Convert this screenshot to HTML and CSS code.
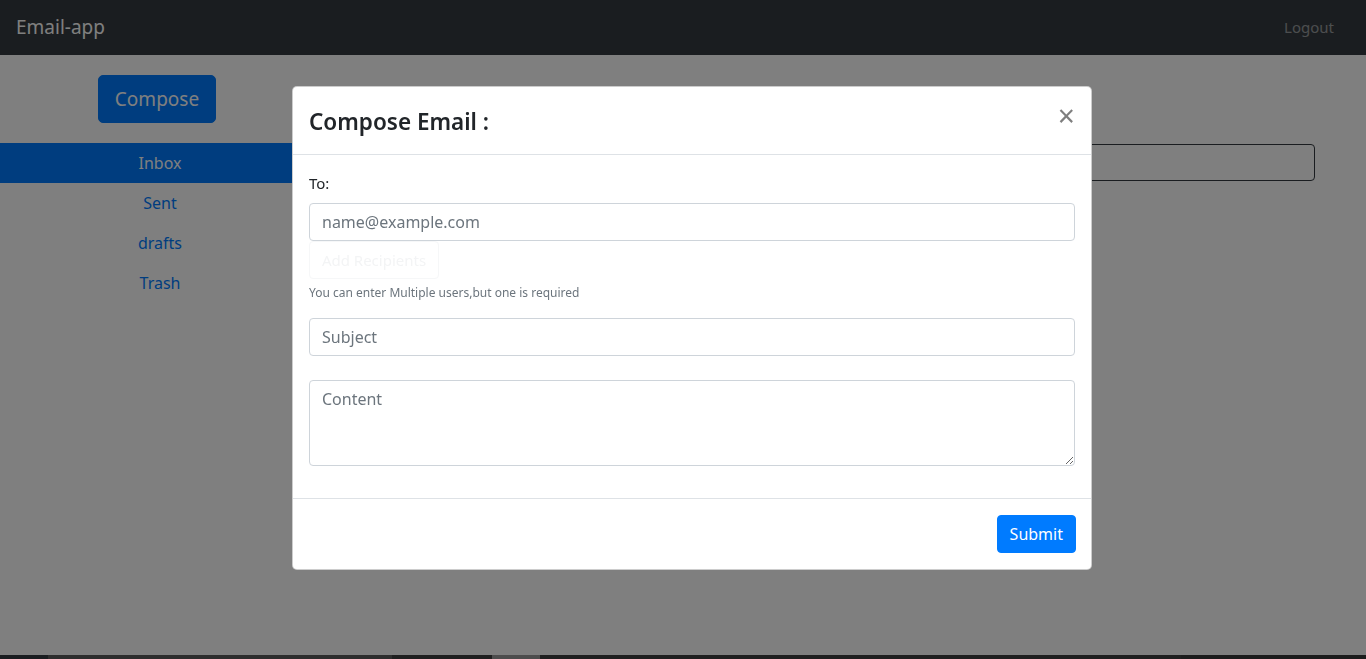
FILE: index.html
```html
<!DOCTYPE html>
<html>
<head>
<meta charset="utf-8">
<link rel="stylesheet" href="styles.css">
</head>
<body>
<nav class="navbar">
  <span class="brand">Email-app</span>
  <span class="logout">Logout</span>
</nav>
<div class="page">
  <aside class="sidebar">
    <button class="btn btn-primary btn-lg">Compose</button>
    <ul class="nav">
      <li class="nav-link active">Inbox</li>
      <li class="nav-link">Sent</li>
      <li class="nav-link">drafts</li>
      <li class="nav-link">Trash</li>
    </ul>
  </aside>
  <main class="main">
    <input class="search" type="text">
  </main>
</div>
<div class="scrollstrip">
  <span class="seg s1"></span><span class="seg s2"></span><span class="seg s3"></span><span class="seg s4"></span><span class="seg s5"></span><span class="seg s6"></span>
</div>
<div class="backdrop"></div>
<div class="modal">
  <div class="modal-content">
    <div class="modal-header">
      <h4 class="modal-title">Compose Email :</h4>
      <span class="close">&times;</span>
    </div>
    <div class="modal-body">
      <div class="form-group">
        <label class="label">To:</label>
        <input class="form-control" type="text" placeholder="name@example.com">
        <button class="btn btn-ghost">Add Recipients</button>
        <small class="form-text">You can enter Multiple users,but one is required</small>
      </div>
      <div class="form-group">
        <input class="form-control" type="text" placeholder="Subject">
      </div>
      <div class="form-group gap-top">
        <textarea class="form-control area" placeholder="Content"></textarea>
      </div>
    </div>
    <div class="modal-footer">
      <button class="btn btn-primary">Submit</button>
    </div>
  </div>
</div>
</body>
</html>
```
FILE: styles.css
```css
* { box-sizing: border-box; }
html, body { margin: 0; height: 100%; overflow: hidden; }
body {
  font-family: "Segoe UI", "Noto Sans", "Open Sans", sans-serif;
  font-size: 16px;
  line-height: 1.5;
  color: #212529;
  background: #fff;
}
.navbar {
  height: 55px;
  background: #343a40;
  display: flex;
  align-items: center;
  justify-content: space-between;
  padding: 0 32px 0 16px;
}
.brand { color: #fff; font-size: 19px; }
.logout { color: rgba(255,255,255,.5); font-size: 15px; }
.page { display: flex; height: 600px; }
.sidebar {
  width: 320px;
  padding-top: 20px;
  display: flex;
  flex-direction: column;
  align-items: center;
  gap: 20px;
}
.btn {
  font-family: inherit;
  border: 1px solid transparent;
  border-radius: 4px;
  padding: 6px 12px;
  font-size: 16px;
  line-height: 1.5;
  cursor: pointer;
}
.btn-primary { background: #007bff; border-color: #007bff; color: #fff; }
.btn-lg { font-size: 19px; height: 48px; line-height: 28px; padding: 9px 16px; border-radius: 5px; margin-left: -6px; }
.nav { list-style: none; margin: 0; padding: 0; width: 100%; }
.nav-link { text-align: center; padding: 8px 16px; color: #007bff; }
.nav-link.active { background: #007bff; color: #fff; }
.main { flex: 1; padding: 89px 51px 0 80px; }
.search {
  width: 100%;
  height: 37px;
  border: 1px solid #343a40;
  border-radius: 4px;
  display: block;
}
.scrollstrip {
  position: fixed; left: 0; right: 0; bottom: 0; height: 4px;
  display: flex; background: #343a40;
}
.seg { height: 4px; }
.s1 { width: 48px; background: #343a40; }
.s2 { width: 344px; background: #5a5a5a; }
.s3 { width: 100px; background: #3e3e3e; }
.s4 { width: 48px; background: #9a9a9a; }
.s5 { width: 641px; background: #3e3e3e; }
.s6 { flex: 1; background: #383838; }
.backdrop { position: fixed; inset: 0; background: rgba(0,0,0,.5); }
.modal {
  position: fixed; inset: 0;
  padding: 86px 0 0 292px;
}
.modal-content {
  width: 800px;
  background: #fff;
  border: 1px solid rgba(0,0,0,.2);
  border-radius: 5px;
}
.modal-header {
  height: 68px;
  display: flex;
  align-items: center;
  justify-content: space-between;
  padding: 0 16px;
  border-bottom: 1px solid #dee2e6;
}
.modal-title { margin: 0; font-size: 22.5px; font-weight: 600; line-height: 1.2; padding-top: 2px; }
.close {
  font-size: 30px; font-weight: 400; color: #000; opacity: .5; line-height: 1;
  margin-top: -10px; margin-right: 0;
}
.modal-body { padding: 16px; }
.form-group { margin-bottom: 16px; }
.gap-top { margin-top: 24px; }
.label { display: block; margin-bottom: 8px; font-size: 15px; line-height: 24px; }
.form-control {
  display: block; width: 100%; height: 38px;
  padding: 6px 12px;
  font-family: inherit; font-size: 16px; line-height: 1.5;
  color: #495057;
  border: 1px solid #ced4da;
  border-radius: 4px;
  background: #fff;
}
.form-control::placeholder { color: #6c757d; }
.area { height: 86px; resize: vertical; }
.btn-ghost {
  display: block;
  height: 38px;
  width: 130px;
  padding: 6px 10px;
  font-size: 15px;
  background: #fff;
  color: #f3f4f5;
  border-color: #f6f7f8;
}
.form-text { display: block; margin-top: 4px; font-size: 12px; line-height: 19px; color: #6c757d; }
.modal-footer {
  border-top: 1px solid #dee2e6;
  padding: 16px 15px 16px 16px;
  display: flex;
  justify-content: flex-end;
}
```
